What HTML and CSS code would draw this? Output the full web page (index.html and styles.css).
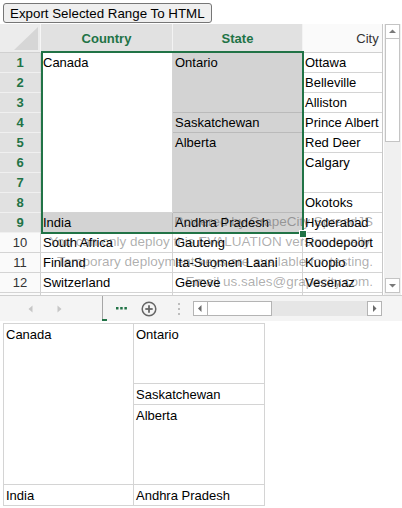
FILE: index.html
```html
<!DOCTYPE html>
<html>
<head>
<meta charset="utf-8">
<link rel="stylesheet" href="styles.css">
</head>
<body>
<button class="export-btn">Export Selected Range To HTML</button>
<div class="sheet">
  <div class="viewport">
    <div class="grid">
      <div class="c corner"><svg width="41" height="29" viewBox="0 0 41 29"><polygon points="38,3 38,26 14,26" fill="#d6d6d6"/></svg></div>
      <div class="c h">Country</div>
      <div class="c h">State</div>
      <div class="c h hn">City</div>

      <div class="c rh">1</div>
      <div class="c span8">Canada</div>
      <div class="c sel span3">Ontario</div>
      <div class="c">Ottawa</div>

      <div class="c rh">2</div>
      <div class="c">Belleville</div>

      <div class="c rh">3</div>
      <div class="c">Alliston</div>

      <div class="c rh">4</div>
      <div class="c sel">Saskatchewan</div>
      <div class="c">Prince Albert</div>

      <div class="c rh">5</div>
      <div class="c sel span4">Alberta</div>
      <div class="c">Red Deer</div>

      <div class="c rh">6</div>
      <div class="c span2">Calgary</div>

      <div class="c rh">7</div>

      <div class="c rh">8</div>
      <div class="c">Okotoks</div>

      <div class="c rh">9</div>
      <div class="c sel">India</div>
      <div class="c sel">Andhra Pradesh</div>
      <div class="c">Hyderabad</div>

      <div class="c rh rn">10</div>
      <div class="c">South Africa</div>
      <div class="c">Gauteng</div>
      <div class="c">Roodepoort</div>

      <div class="c rh rn">11</div>
      <div class="c">Finland</div>
      <div class="c">Ita-Suomen Laani</div>
      <div class="c">Kuopio</div>

      <div class="c rh rn">12</div>
      <div class="c">Switzerland</div>
      <div class="c">Geneve</div>
      <div class="c">Vesenaz</div>

      <div class="c rh rn"></div>
      <div class="c"></div>
      <div class="c"></div>
      <div class="c"></div>
    </div>
    <div class="watermark">
      <div>Powered by GrapeCity SpreadJS</div>
      <div>You can only deploy this EVALUATION version locally.</div>
      <div>Temporary deployment keys are available for testing.</div>
      <div>Email us.sales@grapecity.com.</div>
    </div>
    <div class="selection"></div>
    <div class="handle"></div>
  </div>
  <div class="vscroll">
    <div class="sbtn"><svg width="13" height="13" viewBox="0 0 13 13"><polygon points="3,8 10,8 6.5,4.5" fill="#7a7a7a"/></svg></div>
    <div class="vthumb"></div>
    <div class="sbtn down"><svg width="13" height="13" viewBox="0 0 13 13"><polygon points="3,5 10,5 6.5,8.5" fill="#7a7a7a"/></svg></div>
  </div>
</div>
<div class="tabbar">
  <div class="nav">
    <svg width="5" height="8" viewBox="0 0 5 8"><polygon points="4.5,0.5 4.5,7.5 0.5,4" fill="#c6c6c6"/></svg>
    <svg class="navr" width="5" height="8" viewBox="0 0 5 8"><polygon points="0.5,0.5 0.5,7.5 4.5,4" fill="#c6c6c6"/></svg>
  </div>
  <div class="divider"></div>
  <svg class="more" width="11" height="3" viewBox="0 0 11 3"><rect x="0" y="0" width="2.5" height="2.5" fill="#217346"/><rect x="4.2" y="0" width="2.5" height="2.5" fill="#217346"/><rect x="8.4" y="0" width="2.5" height="2.5" fill="#217346"/></svg>
  <svg class="add" width="16" height="16" viewBox="0 0 16 16"><circle cx="8" cy="8" r="6.8" fill="none" stroke="#666" stroke-width="1.5"/><line x1="4.3" y1="8" x2="11.7" y2="8" stroke="#666" stroke-width="1.8"/><line x1="8" y1="4.3" x2="8" y2="11.7" stroke="#666" stroke-width="1.8"/></svg>
  <svg class="vdots" width="2" height="12" viewBox="0 0 2 12"><rect x="0" y="0" width="2" height="2" fill="#bdbdbd"/><rect x="0" y="5" width="2" height="2" fill="#bdbdbd"/><rect x="0" y="10" width="2" height="2" fill="#bdbdbd"/></svg>
  <div class="hscroll">
    <div class="hbtn"><svg width="13" height="13" viewBox="0 0 13 13"><polygon points="7.5,3 7.5,10 4,6.5" fill="#6a6a6a"/></svg></div>
    <div class="hthumb"></div>
    <div class="htrack"></div>
    <div class="hbtn"><svg width="13" height="13" viewBox="0 0 13 13"><polygon points="5,3 5,10 8.5,6.5" fill="#6a6a6a"/></svg></div>
  </div>
</div>
<table class="out">
  <colgroup><col class="col1"><col class="col2"></colgroup>
  <tr><td rowspan="8">Canada</td><td rowspan="3">Ontario</td></tr>
  <tr></tr>
  <tr></tr>
  <tr class="tall"><td>Saskatchewan</td></tr>
  <tr><td rowspan="4">Alberta</td></tr>
  <tr></tr>
  <tr></tr>
  <tr></tr>
  <tr class="tall"><td>India</td><td>Andhra Pradesh</td></tr>
</table>
</body>
</html>
```

FILE: styles.css
```css
body {
  margin: 0;
  font-family: "Liberation Sans", Arial, sans-serif;
  background: #fff;
}

.export-btn {
  display: block;
  margin: 3px 0 0 3px;
  height: 20px;
  padding: 0 6px;
  font: 13.33px "Liberation Sans", Arial, sans-serif;
  color: #000;
  background: #efefef;
  border: 1px solid #767676;
  border-radius: 3px;
}

.sheet {
  display: flex;
  margin-top: 1px;
  width: 402px;
  height: 271px;
}

.viewport {
  position: relative;
  width: 383px;
  height: 271px;
  box-sizing: border-box;
  border-right: 1px solid #c8c8c8;
  overflow: hidden;
}

.grid {
  display: grid;
  grid-template-columns: 41px 132px 130px 130px;
  grid-template-rows: 29px repeat(13, 20px);
  width: max-content;
}

.c {
  box-sizing: border-box;
  border-right: 1px solid #d4d4d4;
  border-bottom: 1px solid #d4d4d4;
  padding: 0 2px;
  font-size: 13px;
  line-height: 19px;
  white-space: nowrap;
  overflow: hidden;
  color: #000;
}

.span2 { grid-row: span 2; }
.span3 { grid-row: span 3; }
.span4 { grid-row: span 4; }
.span8 { grid-row: span 8; }

.sel {
  background: #d3d3d3;
  border-color: #bababa;
}

.corner {
  padding: 0;
  background: #ececec;
  border-right-color: #f6f6f6;
  border-bottom-color: #d0d0d0;
}
.corner svg { display: block; }

.h {
  display: flex;
  align-items: center;
  justify-content: center;
  font-weight: bold;
  color: #217346;
  background: #e1e1e1;
  border-right-color: #f3f3f3;
  border-bottom-color: #d0d0d0;
}

.h.hn {
  font-weight: normal;
  color: #333;
  background: #fafafa;
  border-right-color: #d4d4d4;
}

.rh {
  text-align: center;
  font-weight: bold;
  color: #217346;
  background: #e1e1e1;
  border-right-color: #d0d0d0;
  border-bottom-color: #f0f0f0;
}

.rh.rn {
  font-weight: normal;
  color: #333;
  background: #fafafa;
  border-bottom-color: #d4d4d4;
}

.watermark {
  position: absolute;
  left: 0;
  top: 188px;
  width: 373px;
  text-align: right;
  font-size: 13.5px;
  line-height: 20px;
  color: rgba(60, 60, 60, 0.42);
  white-space: nowrap;
  pointer-events: none;
}

.selection {
  position: absolute;
  left: 41px;
  top: 27px;
  width: 263px;
  height: 183px;
  box-sizing: border-box;
  border: 2px solid #217346;
}

.handle {
  position: absolute;
  left: 299px;
  top: 206px;
  width: 6px;
  height: 6px;
  background: #217346;
  border: 1px solid #fff;
}

.vscroll {
  box-sizing: border-box;
  width: 17px;
  margin-left: 1px;
  padding: 0 1px 2px;
  background: #f0f0f0;
  display: flex;
  flex-direction: column;
}

.sbtn {
  box-sizing: border-box;
  height: 15px;
  background: #fff;
  border: 1px solid #c4c4c4;
  display: flex;
  align-items: center;
  justify-content: center;
}
.sbtn.down { margin-top: auto; }

.vthumb {
  box-sizing: border-box;
  height: 103px;
  background: #fff;
  border: 1px solid #c4c4c4;
  border-top: none;
}

.tabbar {
  display: flex;
  align-items: center;
  height: 26px;
  box-sizing: border-box;
  border-top: 1px solid #cfcfcf;
  background: #f4f4f4;
}

.nav {
  width: 102px;
  display: flex;
  align-items: center;
  padding-left: 28px;
  box-sizing: border-box;
}
.nav .navr { margin-left: 24px; }

.divider {
  position: relative;
  align-self: flex-start;
  width: 1px;
  height: 23px;
  background: #a6a6a6;
}
.divider::after {
  content: "";
  position: absolute;
  left: 0;
  bottom: -2px;
  width: 5px;
  height: 2px;
  background: #217346;
}

.more { margin-left: 13px; }
.add { margin-left: 14px; }
.vdots { margin-left: 21px; }

.hscroll {
  margin-left: 13px;
  width: 189px;
  height: 15px;
  display: flex;
}

.hbtn {
  box-sizing: border-box;
  width: 15px;
  height: 15px;
  background: #fff;
  border: 1px solid #b4b4b4;
  display: flex;
  align-items: center;
  justify-content: center;
}

.hthumb {
  box-sizing: border-box;
  width: 64px;
  background: #fff;
  border: 1px solid #b4b4b4;
  border-left: none;
}

.htrack {
  flex: 1;
  background: #e6e6e6;
}

.out {
  border-collapse: collapse;
  table-layout: fixed;
  width: 262px;
  margin: 2px 0 0 3px;
  font-size: 13px;
}
.out .col1 { width: 130px; }
.out .col2 { width: 131px; }
.out tr { height: 20px; }
.out tr.tall { height: 21px; }
.out td {
  border: 1px solid #d4d4d4;
  padding: 2px 2px 0;
  vertical-align: top;
  line-height: 18px;
  color: #000;
  white-space: nowrap;
}
```
